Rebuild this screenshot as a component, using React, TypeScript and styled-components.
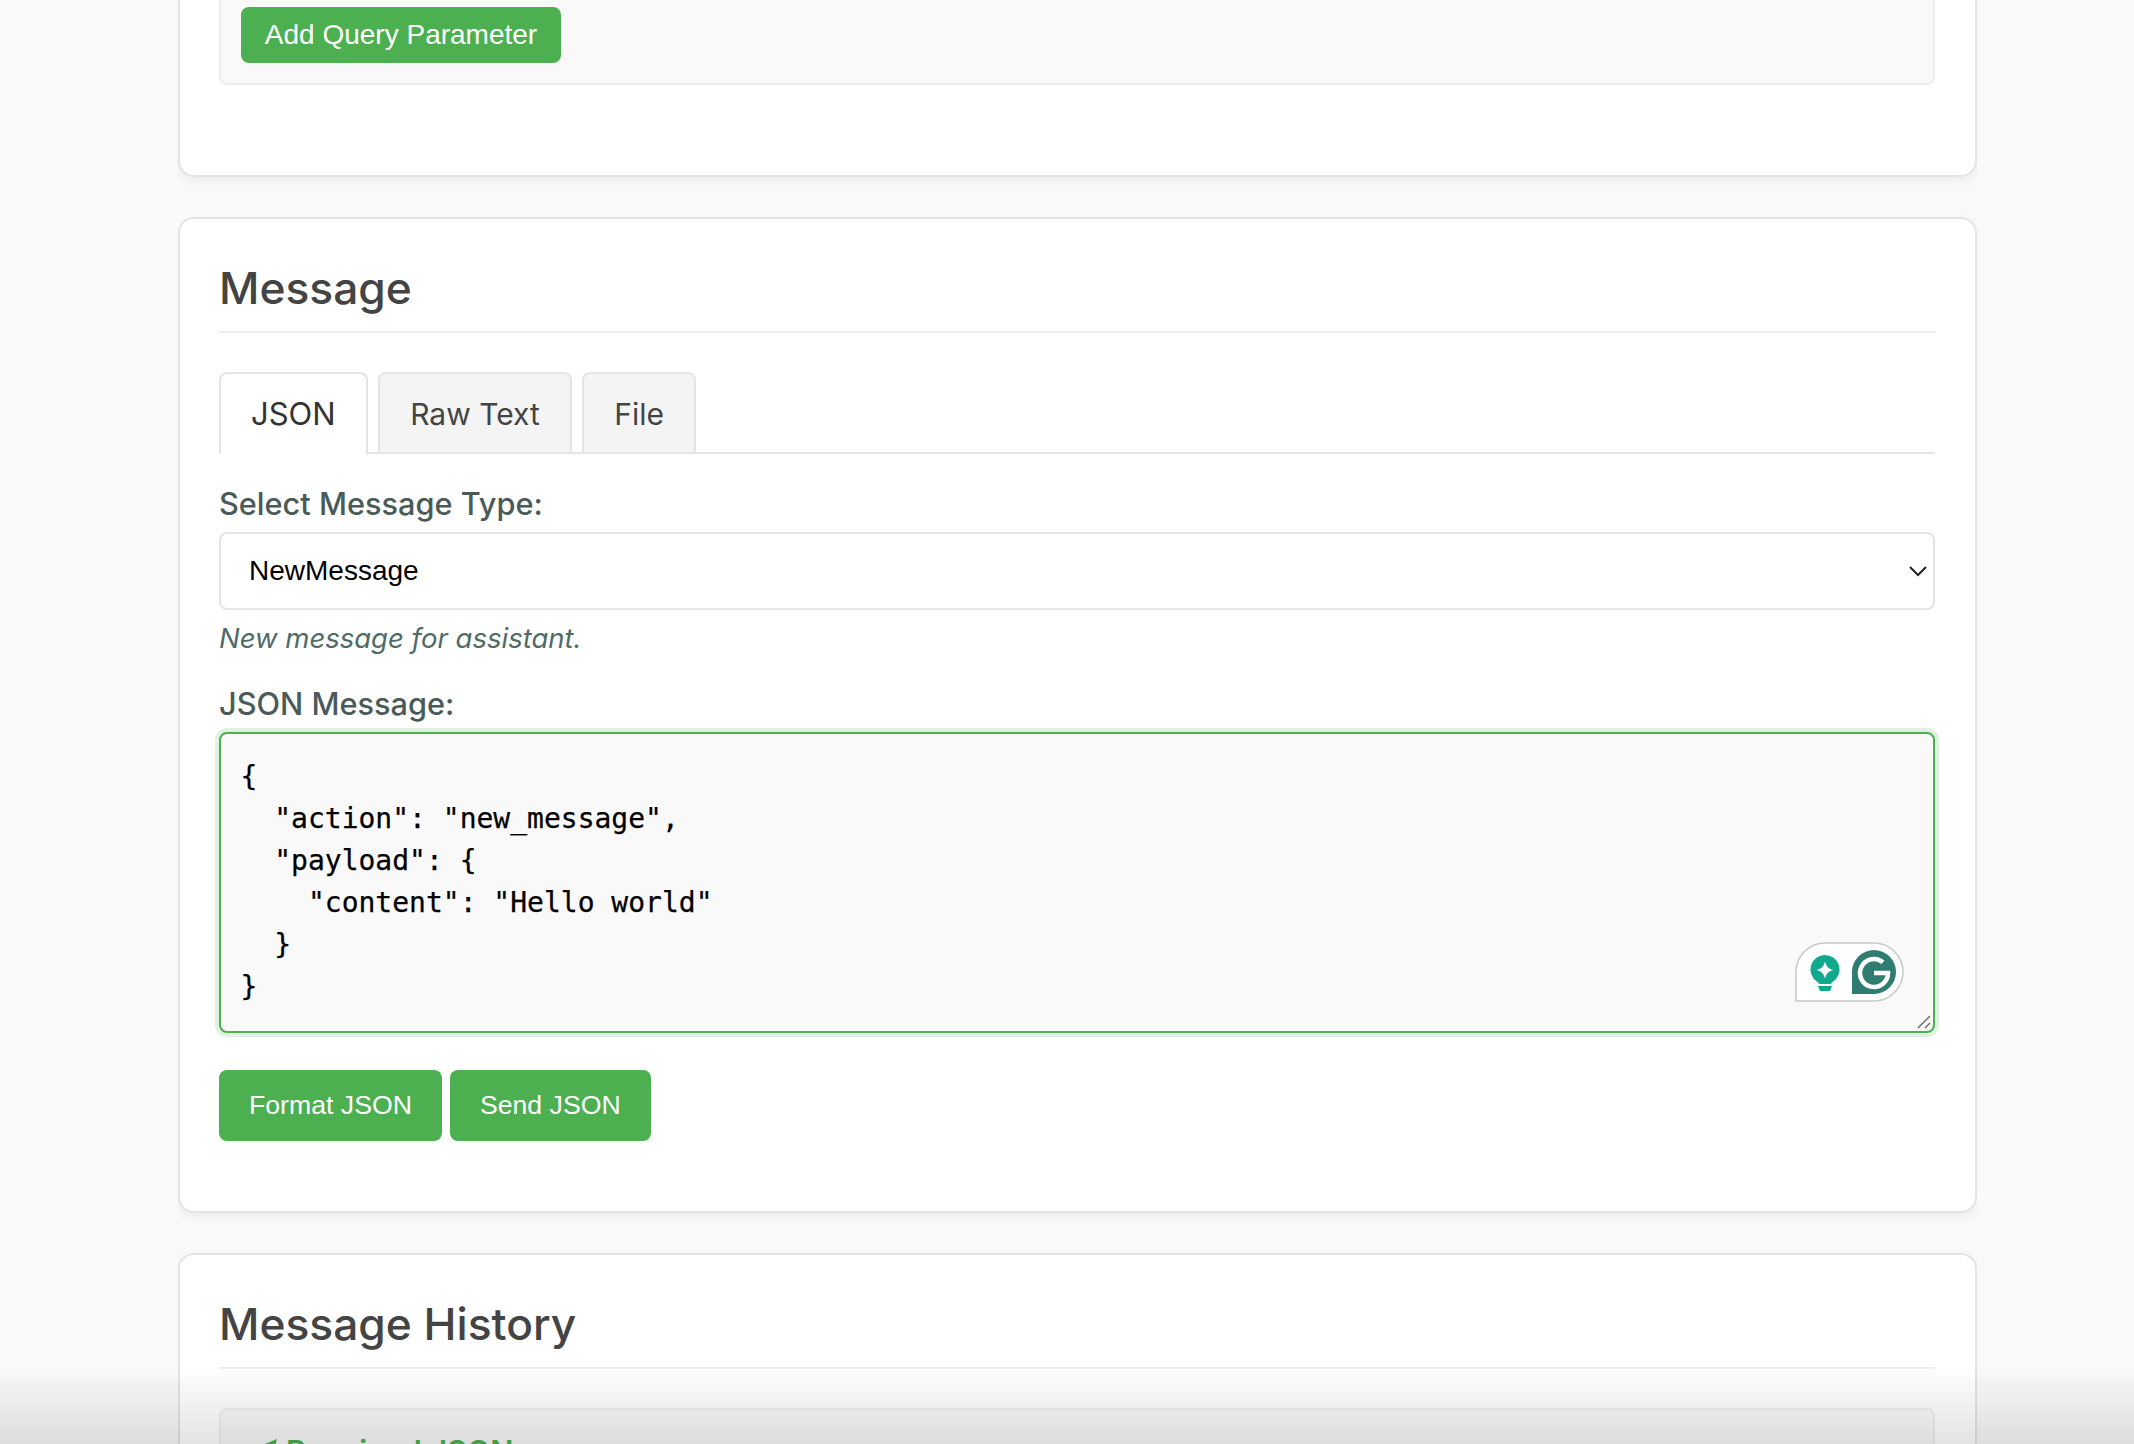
import styled, { createGlobalStyle } from "styled-components";

const GlobalStyle = createGlobalStyle`
  html, body {
    margin: 0;
    padding: 0;
    height: 100%;
    overflow: hidden;
    background-color: #f9f9f9;
  }
`;

const Page = styled.div`
  width: 1799px;
  height: 1444px;
  margin-left: 178px;
  overflow: hidden;
  display: flex;
  flex-direction: column;
  gap: 40px;
`;

const Card = styled.section`
  flex: none;
  box-sizing: border-box;
  background-color: #fff;
  border: 2px solid #e4e4e4;
  border-radius: 16px;
  padding: 38px 40px 70px 39px;
  box-shadow: 0 4px 12px rgba(0, 0, 0, 0.05);
`;

const FirstCard = styled(Card)`
  margin-top: -13px;
  padding-top: 0;
  padding-bottom: 90px;
  border-top: none;
  border-radius: 0 0 16px 16px;
`;

const Panel = styled.div`
  box-sizing: border-box;
  background-color: #f9f9f9;
  border: 2px solid #eeeeee;
  border-radius: 8px;
  padding: 18px 20px 20px;
`;

const SmallButton = styled.button`
  display: block;
  width: 320px;
  height: 56px;
  padding: 0;
  border: none;
  border-radius: 8px;
  background-color: #4caf50;
  color: #fff;
  font-family: "Liberation Sans", Arial, sans-serif;
  font-size: 28px;
`;

const Heading = styled.h2`
  margin: 0 0 39px;
  padding: 0 0 12px;
  border-bottom: 2px solid #eeeeee;
  color: #444;
  font-family: Inter, sans-serif;
  font-size: 44.3px;
  line-height: 62px;
  font-weight: 550;
`;

const Tabs = styled.div`
  display: flex;
  gap: 10.5px;
  height: 80px;
  border-bottom: 2px solid #e4e4e4;
`;

const Tab = styled.div<{ $active?: boolean }>`
  box-sizing: border-box;
  height: ${(p) => (p.$active ? "82px" : "80px")};
  display: flex;
  align-items: center;
  padding: 1px 30px ${(p) => (p.$active ? "2px" : "0")};
  border: 2px solid #e4e4e4;
  border-bottom: none;
  border-radius: 8px 8px 0 0;
  background-color: ${(p) => (p.$active ? "#fff" : "#f4f4f4")};
  color: ${(p) => (p.$active ? "#333" : "#444")};
  font-family: Inter, sans-serif;
  font-size: ${(p) => (p.$active ? "31px" : "30px")};
`;

const Label = styled.label<{ $top?: number }>`
  display: block;
  color: #4a5a58;
  font-family: Inter, sans-serif;
  font-size: 30.7px;
  font-weight: 500;
  line-height: 40px;
  margin: ${(p) => p.$top ?? 0}px 0 8px;
`;

const SelectBox = styled.div`
  box-sizing: border-box;
  height: 78px;
  display: flex;
  align-items: center;
  justify-content: space-between;
  padding: 0 6px 0 28px;
  border: 2px solid #e4e4e4;
  border-radius: 8px;
  background-color: #fff;
  color: #000;
  font-family: "Liberation Sans", Arial, sans-serif;
  font-size: 28px;
`;

const Hint = styled.p`
  margin: 6px 0 24px;
  color: #4f6b66;
  font-family: Inter, sans-serif;
  font-size: 27.5px;
  font-style: italic;
  line-height: 44px;
`;

const EditorWrap = styled.div`
  position: relative;
  box-sizing: border-box;
  height: 301px;
  border: 2px solid #4caf50;
  border-radius: 8px;
  background-color: #f9f9f9;
  box-shadow: 0 0 0 4px rgba(76, 175, 80, 0.18);
`;

const Code = styled.pre`
  margin: 0;
  padding: 22px 19.5px;
  color: #000;
  font-family: "DejaVu Sans Mono", monospace;
  font-size: 28px;
  line-height: 42px;
  -webkit-text-stroke: 0.25px #000;
`;

const Grammarly = styled.div`
  position: absolute;
  right: 29px;
  bottom: 29px;
  line-height: 0;
`;

const Grip = styled.svg`
  position: absolute;
  right: 1px;
  bottom: 1px;
`;

const ButtonRow = styled.div`
  display: flex;
  gap: 8px;
  margin-top: 37px;
`;

const Button = styled.button`
  height: 71px;
  padding: 0 30px;
  border: none;
  border-radius: 8px;
  background-color: #4caf50;
  color: #fff;
  font-family: "Liberation Sans", Arial, sans-serif;
  font-size: 26.67px;
`;

const HistoryEntry = styled.div`
  display: flex;
  align-items: center;
  gap: 8px;
  padding: 19px 31px;
  background-color: #f9f9f9;
  border: 2px solid #eeeeee;
  border-radius: 8px;
  color: #4caf50;
  font-family: Inter, sans-serif;
  font-size: 30.5px;
  font-weight: 600;
  line-height: 44px;
`;

const BottomFade = styled.div`
  position: fixed;
  left: 0;
  right: 0;
  bottom: 0;
  height: 78px;
  pointer-events: none;
  background: linear-gradient(to bottom, rgba(0, 0, 0, 0), rgba(0, 0, 0, 0.11));
`;

const Chevron = () => (
  <svg width="18" height="12" viewBox="0 0 18 12" fill="none">
    <path d="M1 2l8 8 8-8" stroke="#222" strokeWidth="2" />
  </svg>
);

const Plane = () => (
  <svg width="26" height="26" viewBox="0 0 24 24" fill="#4caf50">
    <path d="M23 1 1 10l7 3 2 9 4-6 5 3z" />
  </svg>
);

const GrammarlyBadge = () => (
  <svg width="109" height="60" viewBox="0 0 109 60">
    <path
      d="M1 59V30C1 14 14 1 30 1h49c16 0 29 13 29 29s-13 29-29 29z"
      fill="#fff"
      stroke="#c8c8c8"
      strokeWidth="1.5"
    />
    <path
      d="M30 13a14.500 14.500 0 0 0-8 26.600c1 .8 2 1.800 2.200 2.400h11.600c.2-.6 1.200-1.600 2.200-2.400A14.500 14.500 0 0 0 30 13z"
      fill="#11a98e"
    />
    <path d="M30 19.500c1.500 5 3 7 8.500 8.500-5.500 1.500-7 3.500-8.500 8.500-1.500-5-3-7-8.500-8.500 5.500-1.500 7-3.500 8.500-8.500z" fill="#fff" />
    <path d="M23 44h14l-2 5H25z" fill="#11a98e" />
    <path d="M57 52V30a22 22 0 1 1 22 22z" fill="#2f7d70" />
    <path d="M88 20.300a14 14 0 1 0 5 10.700H79" fill="none" stroke="#fff" strokeWidth="4.500" />
  </svg>
);

export default function App() {
  return (
    <Page>
      <GlobalStyle />
      <FirstCard>
        <Panel>
          <SmallButton>Add Query Parameter</SmallButton>
        </Panel>
      </FirstCard>

      <Card>
        <Heading>Message</Heading>
        <Tabs>
          <Tab $active>JSON</Tab>
          <Tab>Raw Text</Tab>
          <Tab>File</Tab>
        </Tabs>
        <Label $top={30}>Select Message Type:</Label>
        <SelectBox>
          NewMessage
          <Chevron />
        </SelectBox>
        <Hint>New message for assistant.</Hint>
        <Label>JSON Message:</Label>
        <EditorWrap>
          <Code>{`{
  "action": "new_message",
  "payload": {
    "content": "Hello world"
  }
}`}</Code>
          <Grammarly>
            <GrammarlyBadge />
          </Grammarly>
          <Grip width="16" height="16" viewBox="0 0 16 16">
            <path d="M2 14 14 2M9 14l5-5" stroke="#666" strokeWidth="1.4" />
          </Grip>
        </EditorWrap>
        <ButtonRow>
          <Button>Format JSON</Button>
          <Button>Send JSON</Button>
        </ButtonRow>
      </Card>

      <Card>
        <Heading>Message History</Heading>
        <HistoryEntry>
          <Plane />
          Received JSON
        </HistoryEntry>
      </Card>
      <BottomFade />
    </Page>
  );
}
